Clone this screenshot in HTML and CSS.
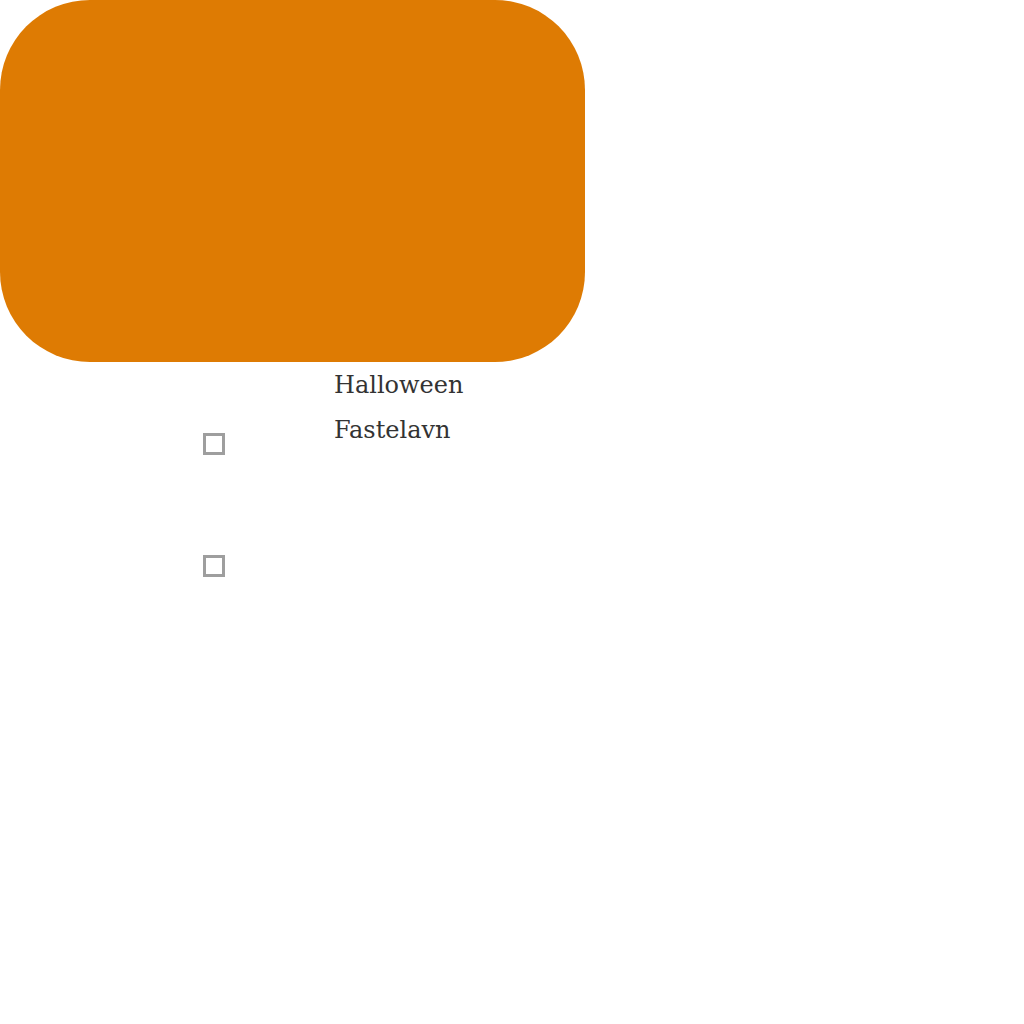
FILE: index.html
```html
<!DOCTYPE html>
<html>
<head>
<meta charset="utf-8">
<link rel="stylesheet" href="styles.css">
</head>
<body>
<div class="banner"></div>
<div class="content">
  <div class="checks">
    <span class="box"></span>
    <span class="box"></span>
  </div>
  <ul class="labels">
    <li>Halloween</li>
    <li>Fastelavn</li>
  </ul>
</div>
</body>
</html>
```
FILE: styles.css
```css
body {
  margin: 0;
  background: #fff;
  font-family: "Roboto Slab", "DejaVu Serif", serif;
}
.banner {
  width: 585px;
  height: 362px;
  background: #de7b03;
  border-radius: 90px;
}
.content {
  display: flex;
  padding-left: 203px;
}
.checks {
  display: flex;
  flex-direction: column;
  gap: 100px;
  padding-top: 71px;
}
.box {
  display: block;
  width: 16px;
  height: 16px;
  border: 3px solid #9e9e9e;
}
.labels {
  list-style: none;
  margin: 0 0 0 109px;
  padding: 1px 0 0 0;
  color: #333;
  font-size: 24px;
  line-height: 45px;
}
```
